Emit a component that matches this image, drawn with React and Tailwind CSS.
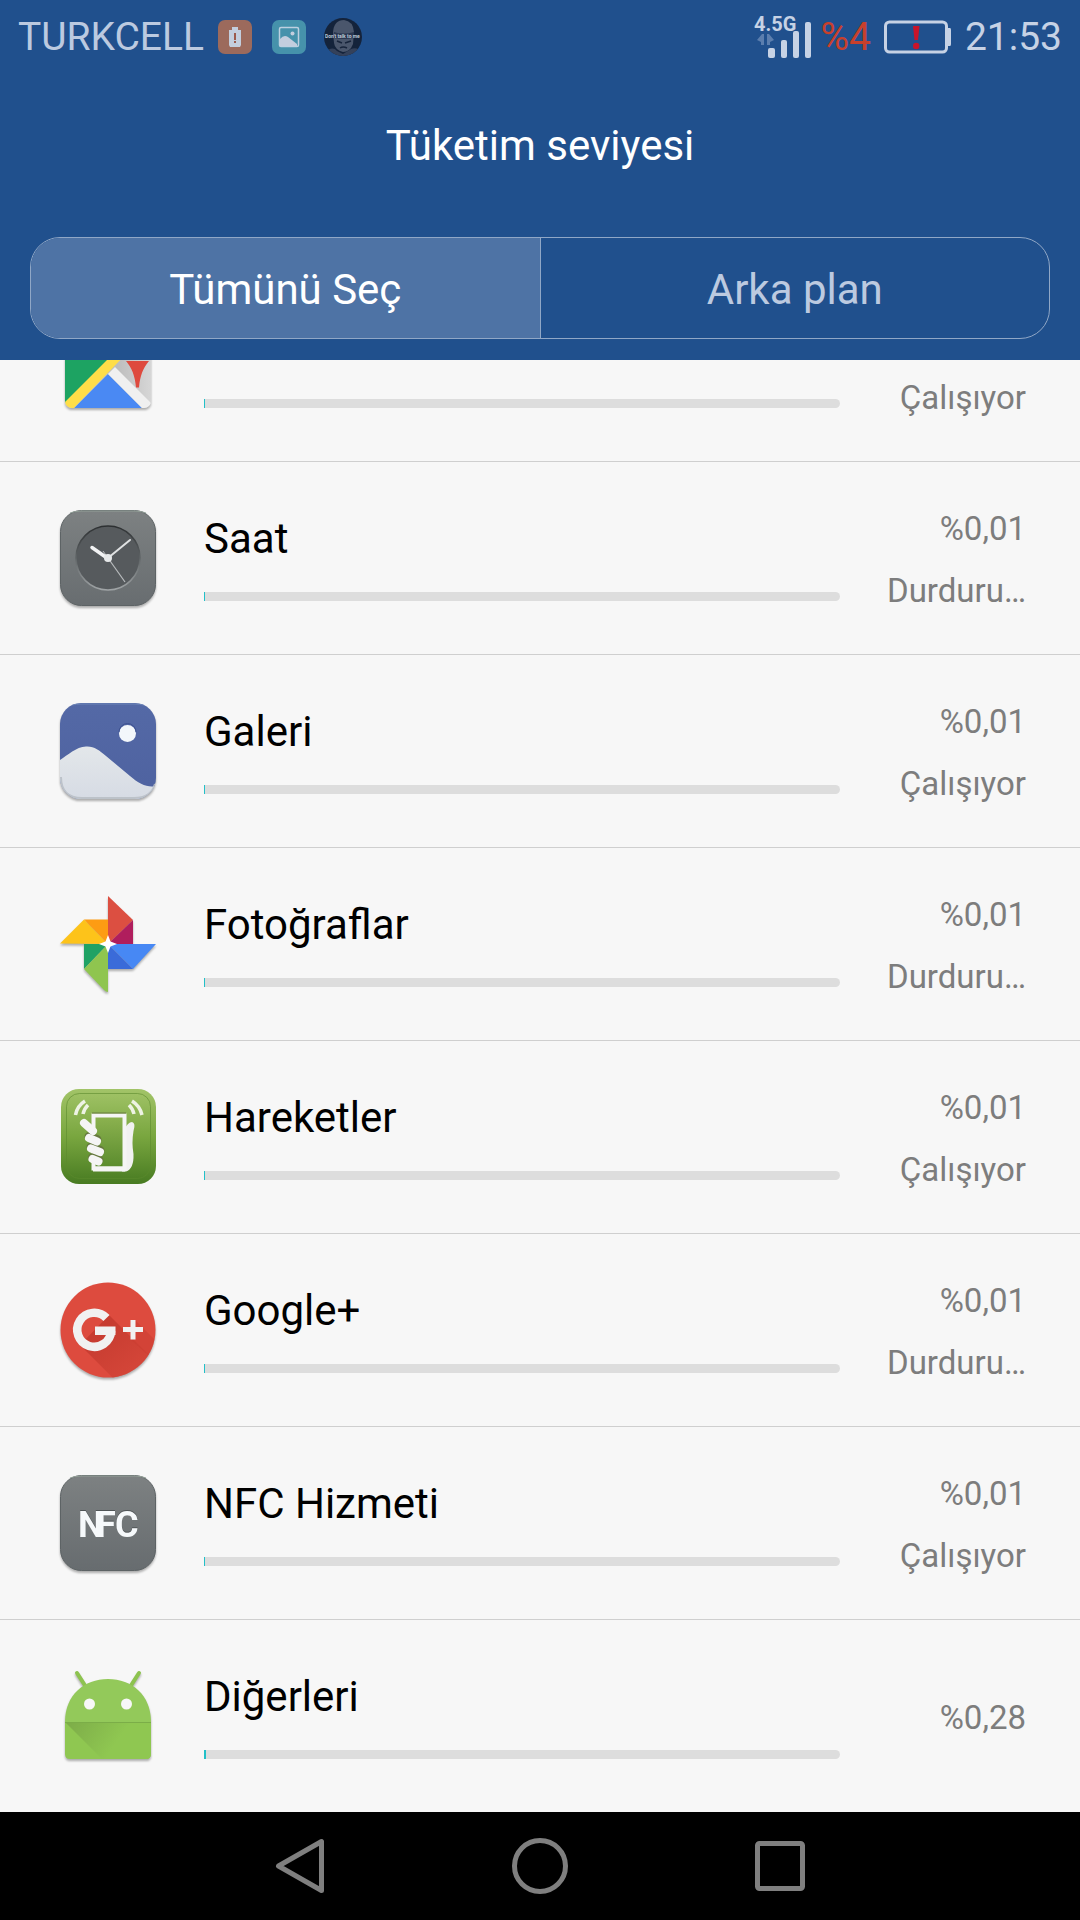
import React, { useState } from "react";

const MapsIcon = () => (
  <svg viewBox="0 0 96 96" className="w-24 h-24 drop-shadow-[0_2px_1px_rgba(0,0,0,0.3)]">
    <defs>
      <clipPath id="mapsClip">
        <rect x="5" y="5" width="86" height="86" rx="7" />
      </clipPath>
      <linearGradient id="mapsGrey" x1="0" y1="0" x2="1" y2="0">
        <stop offset="0" stopColor="#d9d9d9" />
        <stop offset="0.6" stopColor="#bdbdbd" />
        <stop offset="1" stopColor="#d6d6d6" />
      </linearGradient>
    </defs>
    <g clipPath="url(#mapsClip)">
      <rect x="5" y="5" width="86" height="87" fill="url(#mapsGrey)" />
      <path d="M5 5H86L5 86Z" fill="#1da362" />
      <path d="M48 57L13 92H83Z" fill="#4a89f3" />
      <path d="M2 88L85 5H97L10 95Z" fill="#ffde48" />
      <path d="M48 57L55 50L96 91L85 94Z" fill="#f0f0f0" />
      <path d="M66 44C72 51 75 59 76 70.500H79C80 59 83 51 89 44Z" fill="#de4a3e" />
    </g>
  </svg>
);

const ClockIcon = () => (
  <svg viewBox="0 0 96 96" className="w-24 h-24 drop-shadow-[0_2px_1px_rgba(0,0,0,0.3)]">
    <defs>
      <linearGradient id="clockBody" x1="0" y1="0" x2="0" y2="1">
        <stop offset="0" stopColor="#7d8182" />
        <stop offset="1" stopColor="#686d70" />
      </linearGradient>
      <linearGradient id="clockRim" x1="0" y1="0" x2="0" y2="1">
        <stop offset="0" stopColor="#2c2f31" />
        <stop offset="0.5" stopColor="#5f6466" />
        <stop offset="1" stopColor="#a0a4a6" />
      </linearGradient>
    </defs>
    <rect x="0.500" y="0.500" width="95" height="95" rx="21" fill="url(#clockBody)" stroke="#5d6365" />
    <path d="M10 3Q14 1 22 1H74Q82 1 86 3" stroke="#93a098" fill="none" />
    <circle cx="48" cy="48" r="32" fill="#565a5d" stroke="url(#clockRim)" strokeWidth="1.500" />
    <path d="M48 48L65 72" stroke="#b9bcbe" strokeWidth="1.200" />
    <path d="M48 48L70 30" stroke="#dfe1e2" strokeWidth="2" strokeLinecap="round" />
    <path d="M48 48L43 41" stroke="#b9bcbe" strokeWidth="1" />
    <path d="M47 48L32 37.500" stroke="#f2f3f4" strokeWidth="3.500" strokeLinecap="round" />
    <circle cx="48" cy="48" r="4" fill="#e6e8e9" />
  </svg>
);

const GalleryIcon = () => (
  <svg viewBox="0 0 96 96" className="w-24 h-24 drop-shadow-[0_2px_1px_rgba(0,0,0,0.3)]">
    <defs>
      <clipPath id="galleryClip">
        <rect width="96" height="96" rx="21" />
      </clipPath>
      <linearGradient id="gallerySky" x1="0" y1="0" x2="0" y2="1">
        <stop offset="0" stopColor="#5469a6" />
        <stop offset="1" stopColor="#4e62a0" />
      </linearGradient>
      <linearGradient id="galleryHill" x1="0" y1="0" x2="0" y2="1">
        <stop offset="0" stopColor="#e3e7ea" />
        <stop offset="1" stopColor="#d6dbe4" />
      </linearGradient>
    </defs>
    <g clipPath="url(#galleryClip)">
      <rect width="96" height="96" fill="url(#gallerySky)" />
      <path d="M12 2Q16 1 22 1H74Q80 1 84 2" stroke="#6d86b8" fill="none" />
      <path d="M0 57C8 52 16 44 26 43.500C34 43 39 47 46 53L70 73C79 81 88 85 96 83V96H0Z" fill="url(#galleryHill)" />
      <path d="M1 74Q1 95 22 95H74Q91 95 95 81" stroke="#bcc2c9" strokeWidth="2" fill="none" />
    </g>
    <circle cx="67.500" cy="30.500" r="8.500" fill="#f3f7fb" />
    <path d="M59 29A8.500 8.500 0 0 1 76 29" stroke="#3d5190" fill="none" />
  </svg>
);

const PhotosIcon = () => (
  <svg viewBox="0 0 96 96" className="w-24 h-24 drop-shadow-[0_2px_1px_rgba(0,0,0,0.3)]">
    <path d="M48 0L73 24L48 48Z" fill="#dc4f41" />
    <path d="M73 24V48H48Z" fill="#b01e5d" />
    <path d="M0 47.500L24 23.500L48 48Z" fill="#fdc31a" />
    <path d="M24 23.500H48V48Z" fill="#fd9c13" />
    <path d="M24 48H48L24 73Z" fill="#1fa264" />
    <path d="M24 73L48 48V96Q46 96 44 94Z" fill="#8fc54f" />
    <path d="M48 48H96L73 73Z" fill="#4788f4" />
    <path d="M48 48L73 73H48Z" fill="#3a6bd9" />
    <path d="M48 39L50.500 45.500L57 48L50.500 50.500L48 57L45.500 50.500L39 48L45.500 45.500Z" fill="#fff" />
  </svg>
);

const MotionIcon = () => (
  <svg viewBox="0 0 96 96" className="w-24 h-24">
    <defs>
      <linearGradient id="motionBody" x1="0" y1="0" x2="0" y2="1">
        <stop offset="0" stopColor="#a2c468" />
        <stop offset="0.5" stopColor="#79a63f" />
        <stop offset="1" stopColor="#487b22" />
      </linearGradient>
      <linearGradient id="motionScreen" x1="0" y1="0" x2="0" y2="1">
        <stop offset="0" stopColor="#8db350" />
        <stop offset="1" stopColor="#5a8b2d" />
      </linearGradient>
    </defs>
    <rect x="1" y="0" width="95" height="95" rx="18" fill="url(#motionBody)" />
    <rect x="6.500" y="4.500" width="84" height="85" rx="13" fill="none" stroke="#5c8a2d" strokeOpacity="0.6" />
    <g stroke="#eef3e4" strokeWidth="3.500" fill="none">
      <path d="M15.500 26Q17 17 25 12" />
      <path d="M23 25Q24 20 28 16" />
      <path d="M82 26Q80 17 72 12" />
      <path d="M74 25Q73 20 69 16" />
    </g>
    <path d="M64 41Q68 33 72 33Q76 34 73.500 42Q71.500 54 73.500 65Q74 80 66 82.500H62Z" fill="#f1f1f1" />
    <rect x="33.500" y="26.500" width="31" height="53" fill="url(#motionScreen)" stroke="#f5f5f5" strokeWidth="4" />
    <path d="M33 77.500H65V82.500H33Z" fill="#f5f5f5" />
    <path d="M32 24H66" stroke="#66793f" strokeWidth="1" />
    <g stroke="#66793f" strokeWidth="9" strokeLinecap="round">
      <path d="M29 47.500L37 50.500" />
      <path d="M31 58L40 61.500" />
      <path d="M32.500 68.500L39 71" />
    </g>
    <g stroke="#f5f5f5" strokeWidth="8" strokeLinecap="round">
      <path d="M24 34L33 42" />
      <path d="M29 49L37 52.500" />
      <path d="M31 59.500L40 63" />
      <path d="M32.500 70L38.500 72.500" />
    </g>
  </svg>
);

const GooglePlusIcon = () => (
  <svg viewBox="0 0 96 96" className="w-24 h-24 drop-shadow-[0_2px_1px_rgba(0,0,0,0.3)]">
    <defs>
      <clipPath id="plusClip">
        <circle cx="48" cy="48" r="47.500" />
      </clipPath>
      <linearGradient id="plusShade" x1="0.200" y1="0.200" x2="0.600" y2="0.700">
        <stop offset="0" stopColor="#b83227" />
        <stop offset="1" stopColor="#d04336" />
      </linearGradient>
    </defs>
    <g clipPath="url(#plusClip)">
      <rect width="96" height="96" fill="#dd4b3e" />
      <path d="M20 63L49 33L110 94V120H77Z" fill="url(#plusShade)" opacity="0.6" />
      <path d="M75 38L110 73V92L70 57Z" fill="#c93c30" opacity="0.5" />
    </g>
    {/* open ring with its crossbar */}
    <path d="M46.500 36A17 17 0 1 0 51.200 49" fill="none" stroke="#f1f1f1" strokeWidth="8.500" />
    <rect x="35" y="44.500" width="20.500" height="8.500" fill="#f1f1f1" />
    <path d="M70.500 38H75.500V45H83V50H75.500V57.500H70.500V50H63V45H70.500Z" fill="#f1f1f1" />
  </svg>
);

const NfcIcon = () => (
  <svg viewBox="0 0 96 96" className="w-24 h-24 drop-shadow-[0_2px_1px_rgba(0,0,0,0.3)]">
    <defs>
      <linearGradient id="nfcBody" x1="0" y1="0" x2="0" y2="1">
        <stop offset="0" stopColor="#7d8182" />
        <stop offset="1" stopColor="#676c6f" />
      </linearGradient>
    </defs>
    <rect x="0.500" y="0.500" width="95" height="95" rx="21" fill="url(#nfcBody)" stroke="#5d6365" />
    <path d="M10 3Q14 1 22 1H74Q82 1 86 3" stroke="#93a098" fill="none" />
    <text y="62" fontSize="36" className="font-[Roboto] font-bold drop-shadow-[0_-1px_0_#505557]" fill="#f6f9fb">
      <tspan x="18">N</tspan>
      <tspan x="36">F</tspan>
      <tspan x="55">C</tspan>
    </text>
  </svg>
);

const AndroidIcon = () => (
  <svg viewBox="0 0 96 96" className="w-24 h-24 drop-shadow-[0_2px_1px_rgba(0,0,0,0.3)]">
    <defs>
      <linearGradient id="droidShade" x1="0" y1="0" x2="1" y2="0.300">
        <stop offset="0" stopColor="#7cab48" />
        <stop offset="0.700" stopColor="#8fc751" />
      </linearGradient>
    </defs>
    <path d="M17 5L26 19M79 5L70 19" stroke="#8dc34f" strokeWidth="4" strokeLinecap="round" />
    <path d="M5 54C5 27 24 11 48 11S91 27 91 54Z" fill="#93c95a" />
    <path d="M5 54H91V86Q91 91 86 91H10Q5 91 5 86Z" fill="#8fc751" />
    <path d="M5 54H91V86Q91 91 86 91H42Z" fill="url(#droidShade)" />
    <path d="M5 54.500H91" stroke="#7bad48" />
    <circle cx="29.500" cy="36" r="5.500" fill="#f7f7f7" />
    <circle cx="66.500" cy="36" r="5.500" fill="#f7f7f7" />
  </svg>
);

const apps = [
  { name: "Haritalar", Icon: MapsIcon, percent: "%0,01", status: "Çalışıyor", fill: 1 },
  { name: "Saat", Icon: ClockIcon, percent: "%0,01", status: "Durduru…", fill: 1 },
  { name: "Galeri", Icon: GalleryIcon, percent: "%0,01", status: "Çalışıyor", fill: 1 },
  { name: "Fotoğraflar", Icon: PhotosIcon, percent: "%0,01", status: "Durduru…", fill: 1 },
  { name: "Hareketler", Icon: MotionIcon, percent: "%0,01", status: "Çalışıyor", fill: 1 },
  { name: "Google+", Icon: GooglePlusIcon, percent: "%0,01", status: "Durduru…", fill: 1 },
  { name: "NFC Hizmeti", Icon: NfcIcon, percent: "%0,01", status: "Çalışıyor", fill: 1 },
  { name: "Diğerleri", Icon: AndroidIcon, percent: "%0,28", status: null, fill: 2 },
];

const StatusBar = () => (
  <div className="flex h-[74px] items-center justify-between px-[18px] text-[39px] leading-[46px] text-[#bccae0]">
    <div className="flex items-center">
      <span>TURKCELL</span>
      {/* low battery */}
      <svg viewBox="0 0 34 34" className="ml-[14px] w-[34px] h-[34px]">
        <rect width="34" height="34" rx="7" fill="#9c6a5c" />
        <path d="M14 7H20V10H23V25L22 27H12L11 25V10H14Z" fill="#c3cede" />
        <path d="M16 13H18V20H16ZM16 21H18V23H16Z" fill="#9c5a4c" />
      </svg>
      {/* screenshot */}
      <svg viewBox="0 0 34 34" className="ml-5 w-[34px] h-[34px]">
        <rect width="34" height="34" rx="7" fill="#4692ab" />
        <rect x="7.500" y="7.500" width="19" height="19" rx="1.500" fill="none" stroke="#bdd0e0" strokeWidth="1.500" />
        <path d="M8 19Q12 14 16 17L25 24V26H8Z" fill="#c3cede" />
        <circle cx="20.500" cy="13.500" r="2" fill="#c3cede" />
      </svg>
      {/* contact photo */}
      <svg viewBox="0 0 38 38" className="ml-[18px] w-[38px] h-[38px]">
        <defs>
          <clipPath id="photoClip">
            <circle cx="19" cy="19" r="19" />
          </clipPath>
        </defs>
        <g clipPath="url(#photoClip)">
          <rect width="38" height="38" fill="#14233b" />
          <path d="M9 14Q10 2 20 2Q29 3 30 14L29 26Q26 34 19 34Q11 32 10 25Z" fill="#4a566c" />
          <path d="M0 36Q8 27 13 33L19 36L27 31Q34 28 38 36V38H0Z" fill="#34415a" />
          <path d="M13 23L18 25M21 25L27 23M16 30Q19 28 23 30" stroke="#17243b" strokeWidth="1.500" fill="none" />
          <path d="M10 14Q19 17 30 14V20Q19 22 10 20Z" fill="#2a3750" />
          <text x="1" y="20" fontSize="5" className="font-[Roboto] font-bold" fill="#bdc8d8">
            Don't talk to me
          </text>
        </g>
      </svg>
    </div>

    <div className="flex items-center">
      <svg viewBox="0 -6 58 56" className="w-[58px] h-[56px]">
        <text x="0" y="16" fontSize="20" className="font-[Roboto] font-bold" fill="#c6d2e5">
          4.5G
        </text>
        <path d="M3 25L8 19H10V30H7V27ZM13 19H15L20 25L16 27V30H13Z" fill="#5b7eae" />
        <g fill="#c6d2e5">
          <rect x="14" y="33" width="7" height="10" rx="2" />
          <rect x="27" y="25" width="6" height="18" rx="2" />
          <rect x="39" y="16" width="6" height="27" rx="2" />
          <rect x="51" y="7" width="6" height="36" rx="2" />
        </g>
      </svg>
      <span className="ml-2 text-[#c8402c]">%4</span>
      <svg viewBox="0 0 68 34" className="ml-[13px] w-[68px] h-[34px]">
        <rect x="1.500" y="2" width="61" height="30" rx="4" fill="none" stroke="#c6d2e5" strokeWidth="3" />
        <path d="M64 8H66Q67 8 67 10V24Q67 26 66 26H64Z" fill="#c6d2e5" />
        <path d="M29 6H35.500L34 20H30.500Z" fill="#c9142a" />
        <circle cx="32.200" cy="26" r="3.200" fill="#c9142a" />
      </svg>
      <span className="ml-[13px] text-[#c6d2e5]">21:53</span>
    </div>
  </div>
);

const AppRow = ({ app }) => {
  const { name, Icon, percent, status, fill } = app;
  return (
    <li className="flex h-[193px] shrink-0 items-center border-b border-[#cfcfcf] pl-[60px] pr-[54px] last:h-[192px] last:border-b-0">
      <Icon />
      <div className="ml-12 flex-1 pb-px">
        <div className="text-[42px] leading-[50px] text-black">{name}</div>
        <div role="progressbar" aria-label={name} aria-valuetext={percent} className="mt-7 flex h-[9px]">
          <div className="bg-[#22c0c8]" style={{ width: fill }} />
          <div className="flex-1 rounded-l-xs rounded-r-full bg-[#dddddd]" />
        </div>
      </div>
      <div className="flex w-[186px] flex-col gap-6 pt-1 text-right text-[33px] leading-[38px] text-[#7d7d7d]">
        <div>{percent}</div>
        {status && <div>{status}</div>}
      </div>
    </li>
  );
};

const App = () => {
  const [tab, setTab] = useState("all");

  const tabClass = (id) =>
    tab === id ? "flex-1 pt-1 bg-[#4e73a5] text-white" : "flex-1 pt-1 text-[#bccae0]";

  return (
    <div className="flex h-screen flex-col overflow-hidden bg-[#f7f7f7] font-[Roboto,sans-serif]">
      <header className="shrink-0 bg-[#20508d] pb-[21px]">
        <StatusBar />
        <h1 className="pt-[47px] text-center text-[42px] leading-[50px] text-white">Tüketim seviyesi</h1>
        <div className="mx-[30px] mt-[66px] flex h-[102px] divide-x divide-[#90a7c6] overflow-hidden rounded-[30px] border border-[#90a7c6] text-[42px] leading-[50px]">
          <button type="button" className={tabClass("all")} onClick={() => setTab("all")}>
            Tümünü Seç
          </button>
          <button type="button" className={tabClass("background")} onClick={() => setTab("background")}>
            Arka plan
          </button>
        </div>
      </header>

      {/* list sits at its end, the first row slides under the header */}
      <ul className="flex min-h-0 flex-1 flex-col justify-end overflow-hidden">
        {apps.map((app) => (
          <AppRow key={app.name} app={app} />
        ))}
      </ul>

      <nav className="flex h-[108px] shrink-0 items-center justify-center gap-[180px] bg-black">
        <button type="button" aria-label="Geri">
          <svg viewBox="0 0 60 60" className="w-[60px] h-[60px]" fill="none" stroke="#7f7f7f" strokeWidth="5" strokeLinejoin="round">
            <path d="M51.500 5.500V54.500L8.500 30Z" />
          </svg>
        </button>
        <button type="button" aria-label="Ana ekran">
          <svg viewBox="0 0 60 60" className="w-[60px] h-[60px]" fill="none" stroke="#7f7f7f" strokeWidth="5">
            <circle cx="30" cy="30" r="25.500" />
          </svg>
        </button>
        <button type="button" aria-label="Son uygulamalar">
          <svg viewBox="0 0 60 60" className="w-[60px] h-[60px]" fill="none" stroke="#7f7f7f" strokeWidth="5">
            <rect x="7.500" y="7.500" width="45" height="45" rx="2" />
          </svg>
        </button>
      </nav>
    </div>
  );
};

export default App;
